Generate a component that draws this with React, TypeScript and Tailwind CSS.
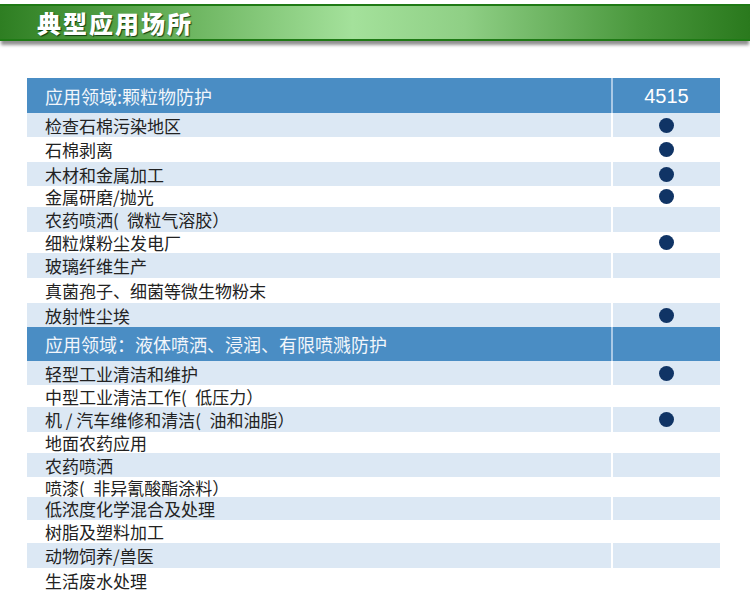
import React from "react";

type Row =
  | { kind: "head"; text: string; h: string; value?: string }
  | { kind: "row"; text: string; h: string; dot: boolean; light: boolean };

const P = "(\u2002";

const rows: Row[] = [
  { kind: "head", text: "应用领域:颗粒物防护", h: "h-[35px]", value: "4515" },
  { kind: "row", text: "检查石棉污染地区", h: "h-[24px]", dot: true, light: true },
  { kind: "row", text: "石棉剥离", h: "h-[25px]", dot: true, light: false },
  { kind: "row", text: "木材和金属加工", h: "h-[24px]", dot: true, light: true },
  { kind: "row", text: "金属研磨/抛光", h: "h-[21px]", dot: true, light: false },
  { kind: "row", text: `农药喷洒${P}微粒气溶胶）`, h: "h-[25px]", dot: false, light: true },
  { kind: "row", text: "细粒煤粉尘发电厂", h: "h-[21px]", dot: true, light: false },
  { kind: "row", text: "玻璃纤维生产", h: "h-[25px]", dot: false, light: true },
  { kind: "row", text: "真菌孢子、细菌等微生物粉末", h: "h-[25px]", dot: false, light: false },
  { kind: "row", text: "放射性尘埃", h: "h-[24px]", dot: true, light: true },
  { kind: "head", text: "应用领域：液体喷洒、浸润、有限喷溅防护", h: "h-[34px]" },
  { kind: "row", text: "轻型工业清洁和维护", h: "h-[24px]", dot: true, light: true },
  { kind: "row", text: `中型工业清洁工作${P}低压力）`, h: "h-[22px]", dot: false, light: false },
  { kind: "row", text: `机 / 汽车维修和清洁${P}油和油脂）`, h: "h-[25px]", dot: true, light: true },
  { kind: "row", text: "地面农药应用", h: "h-[21px]", dot: false, light: false },
  { kind: "row", text: "农药喷洒", h: "h-[24px]", dot: false, light: true },
  { kind: "row", text: `喷漆${P}非异氰酸酯涂料）`, h: "h-[20px]", dot: false, light: false },
  { kind: "row", text: "低浓度化学混合及处理", h: "h-[23px]", dot: false, light: true },
  { kind: "row", text: "树脂及塑料加工", h: "h-[23px]", dot: false, light: false },
  { kind: "row", text: "动物饲养/兽医", h: "h-[25px]", dot: false, light: true },
  { kind: "row", text: "生活废水处理", h: "h-[24px]", dot: false, light: false },
];

const cjk = "font-['Noto_Sans_CJK_SC','Noto_Sans',sans-serif]";

export default function App() {
  return (
    <div className={`w-[750px] h-[598px] overflow-hidden bg-white ${cjk}`}>
      <div className="pt-[4px]">
        <div className="h-[37px] border-y-2 border-[#1f7a15] bg-[linear-gradient(to_right,#2e7e22_0%,#5aa64c_18%,#a4e19b_47%,#8fcf85_62%,#4a983d_85%,#2a791d_100%)] shadow-[0_5px_3px_-1px_rgba(70,70,70,0.6)] flex items-center pl-[37px]">
          <span className="text-white text-[24px] font-black tracking-[2px] leading-none [text-shadow:1px_1px_1px_rgba(0,40,0,0.8)]">
            典型应用场所
          </span>
        </div>
      </div>

      <div className="ml-[27px] w-[693px] mt-[37px] flex flex-col">
        {rows.map((r, i) =>
          r.kind === "head" ? (
            <div key={i} className={`flex gap-[2px] bg-[#a9c9e6] ${r.h}`}>
              <div className="w-[584px] bg-[#4a8dc4] flex items-center pl-[18px] text-[18px] leading-none text-[#f2f6fb]">
                {r.text}
              </div>
              <div className="flex-1 bg-[#4a8dc4] flex items-center justify-center text-[20px] leading-none text-white font-['Liberation_Sans',sans-serif]">
                {r.value ?? ""}
              </div>
            </div>
          ) : (
            <div key={i} className={`flex gap-[2px] bg-white ${r.h}`}>
              <div
                className={`w-[584px] flex items-center pl-[18px] text-[17px] text-[#222] leading-none whitespace-pre ${
                  r.light ? "bg-[#dce8f4]" : "bg-white"
                }`}
              >
                {r.text}
              </div>
              <div
                className={`flex-1 flex items-center justify-center ${
                  r.light ? "bg-[#dce8f4]" : "bg-white"
                }`}
              >
                {r.dot && <span className="block w-[15px] h-[15px] rounded-full bg-[#103465]" />}
              </div>
            </div>
          )
        )}
      </div>
    </div>
  );
}
